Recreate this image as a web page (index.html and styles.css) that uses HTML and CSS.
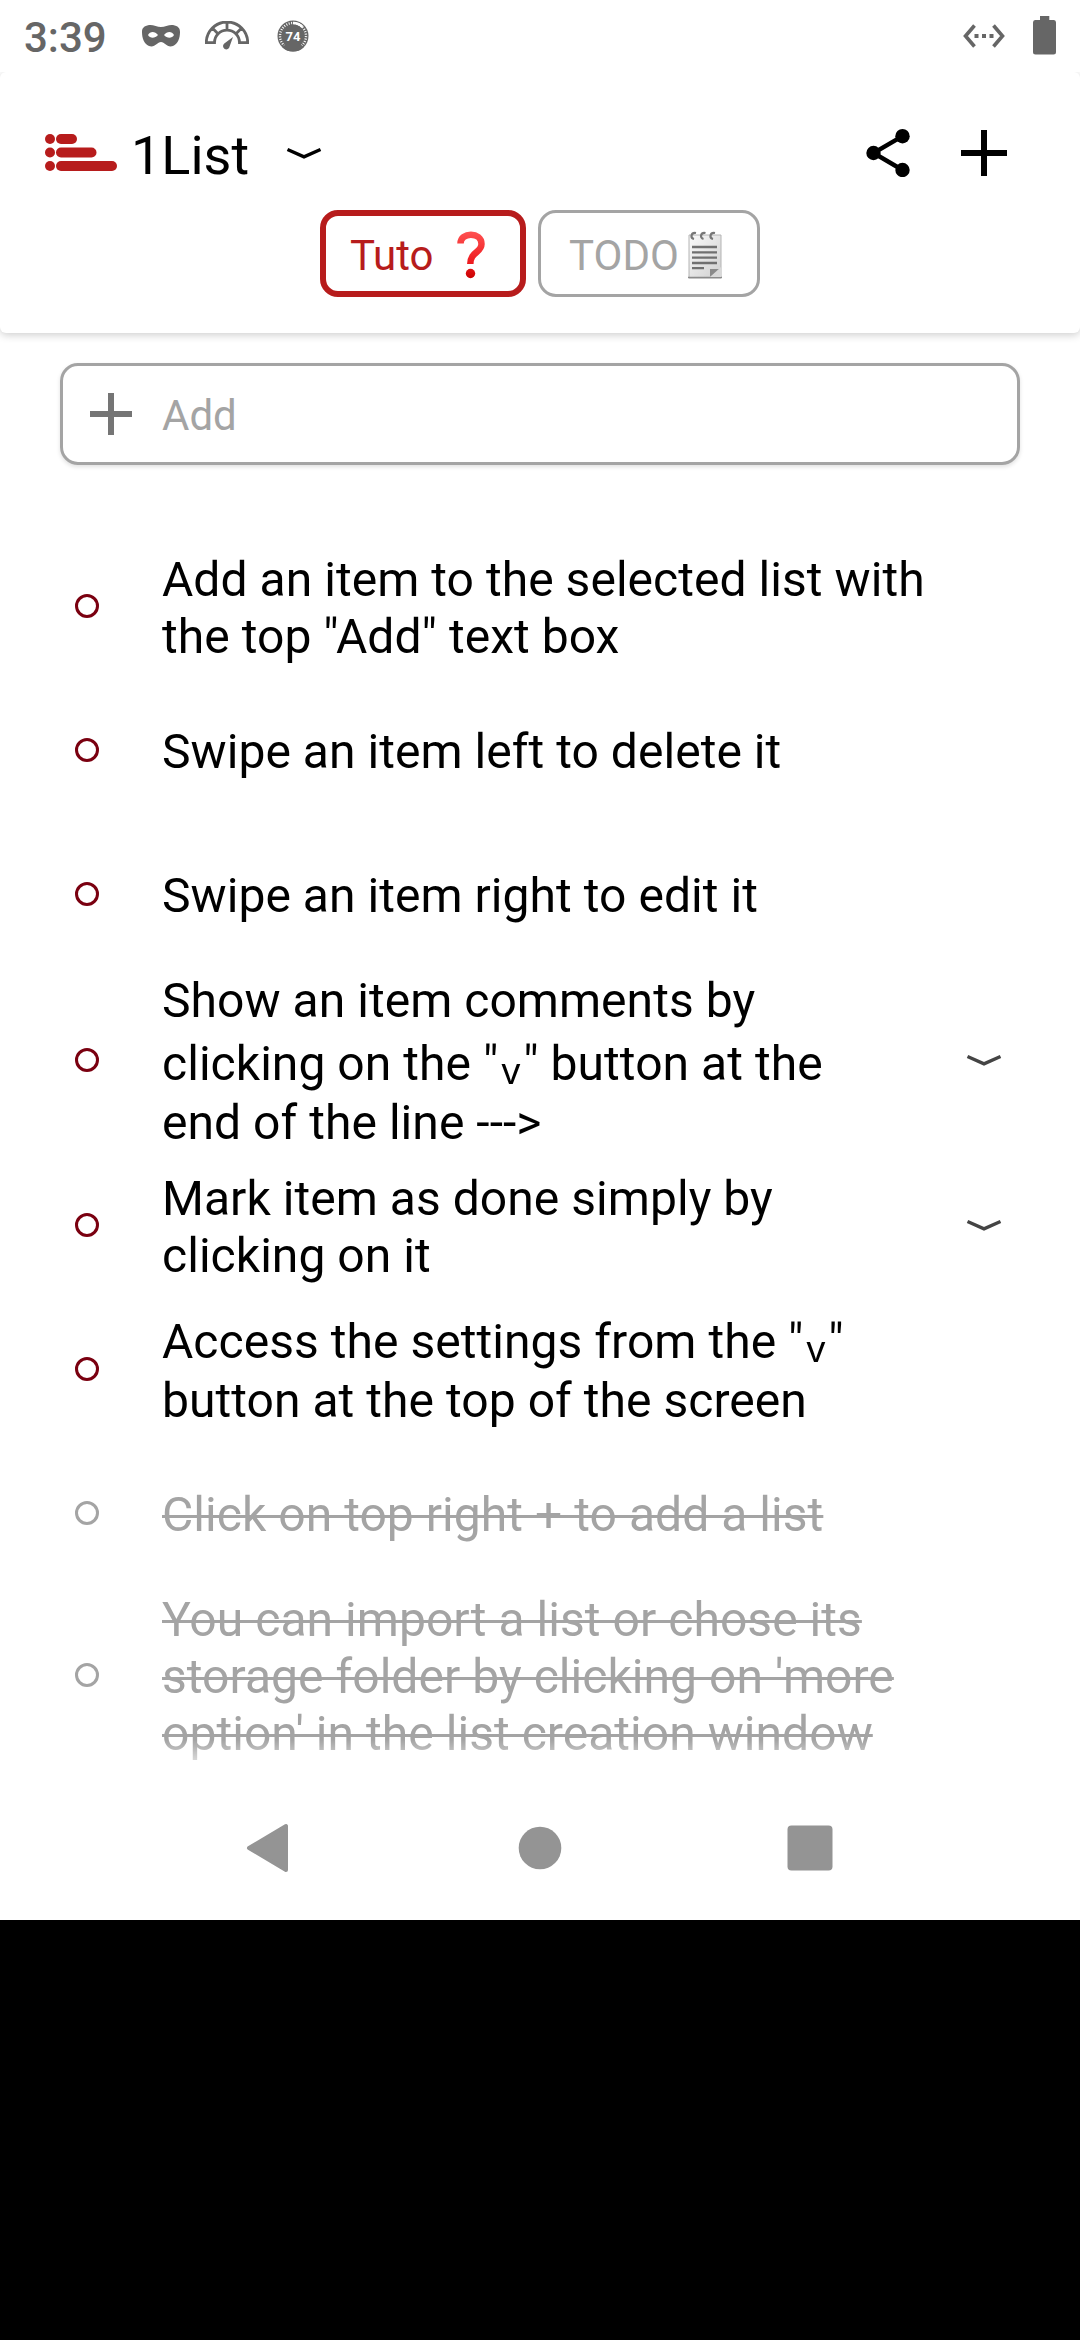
FILE: index.html
```html
<!DOCTYPE html>
<html lang="en">
<head>
<meta charset="utf-8">
<title>1List</title>
<link rel="stylesheet" href="styles.css">
</head>
<body>
<div class="screen">
  <div class="status">
    <span class="clock">3:39</span>
    <svg class="mask" width="40" height="24" viewBox="0 0 40 24"><path fill-rule="evenodd" d="M8 1C12 .4 16 3 20 3S28 .4 32 1C37 2 39 4 39 8C39 14 37 20 32 22C26 24 24 18 20 18S14 24 8 22C3 20 1 14 1 8C1 4 3 2 8 1ZM7 11C9 14.500 14 14.500 17 11C14 7 9 7 7 11ZM23 11C26 14.500 31 14.500 33 11C31 7 26 7 23 11Z"/></svg>
    <svg class="gauge" width="44" height="30" viewBox="0 0 44 30"><path d="M1.300 21.700A20.700 20.700 0 0 1 42.700 21.700H34.500A12.500 12.500 0 0 0 9.500 21.700ZM22 1V9M7.400 7.100L13.200 12.900M36.600 7.100L30.800 12.900" fill="none" stroke="#666" stroke-width="2.800"/><path d="M28 16L24.600 25.500A3.300 3.300 0 1 1 19.300 22.500Z"/></svg>
    <svg class="badge" width="32" height="32" viewBox="0 0 32 32"><circle cx="16" cy="16" r="15.500"/><circle cx="16" cy="16" r="13" fill="none" stroke="#fff" stroke-width="2.400" stroke-dasharray="1 1.500" pathLength="82" transform="rotate(130 16 16)"/><path d="M16 3A13 13 0 0 1 25.500 7" fill="none" stroke="#fff" stroke-width="2.600"/><path d="M5 27L16 19L27 27A15.500 15.500 0 0 1 5 27Z"/><text x="16" y="20.500" text-anchor="middle">74</text></svg>
    <span class="grow"></span>
    <svg class="ethernet" width="42" height="24" viewBox="0 0 42 24"><path d="M11.500 1.500L2.500 12L11.500 22.500M30.500 1.500L39.500 12L30.500 22.500" fill="none" stroke="#666" stroke-width="3.600"/><path d="M11.500 10h4v4h-4zM19 10h4v4h-4zM26.500 10h4v4h-4z"/></svg>
    <svg class="battery" width="23" height="39" viewBox="0 0 23 39"><path d="M7 0H16.300V4H21Q23 4 23 6.500V36Q23 38.500 20.500 38.500H2.500Q0 38.500 0 36V6.500Q0 4 2 4H7Z"/></svg>
  </div>

  <header class="header">
    <div class="bar">
      <svg class="logo" width="73" height="38" viewBox="0 0 73 38"><circle cx="5" cy="5" r="5"/><circle cx="5" cy="18.500" r="5"/><circle cx="5" cy="32" r="5"/><rect x="11" width="21" height="10" rx="5"/><rect x="11" y="13.500" width="40.500" height="10" rx="5"/><rect x="11" y="27" width="61" height="10" rx="5"/></svg>
      <h1 class="title">1List</h1>
      <svg class="chevron" width="36" height="14" viewBox="0 0 36 14"><path d="M1.500 2.500L18 9.800L34.500 2.500"/></svg>
      <span class="grow"></span>
      <svg class="share" width="44" height="48" viewBox="0 0 44 48"><path d="M36.500 7.200L7.500 24L36.500 41" fill="none" stroke="#000" stroke-width="4.400"/><circle cx="36.500" cy="7.200" r="7.200"/><circle cx="7.500" cy="24" r="7.200"/><circle cx="36.500" cy="41" r="7.200"/></svg>
      <svg width="46" height="46" viewBox="0 0 46 46"><path d="M20 0h6v20h20v6h-20v20h-6v-20h-20v-6h20z"/></svg>
    </div>
    <nav class="tabs">
      <div class="tab active"><span>Tuto</span>
        <svg class="question" width="28" height="48" viewBox="0 0 28 48"><defs><linearGradient id="red" x1="0" y1="0" x2="0" y2="48" gradientUnits="userSpaceOnUse"><stop offset="0" stop-color="#ff5252"/><stop offset=".65" stop-color="#ee1c20"/><stop offset="1" stop-color="#c80000"/></linearGradient></defs><path d="M3.500 12.500C3.500 .7 24.500 .7 24.500 13C24.500 22 13.300 20.500 13.300 33" fill="none" stroke="url(#red)" stroke-width="6.500"/><circle cx="13.500" cy="42.500" r="4.700" fill="url(#red)"/></svg>
      </div>
      <div class="tab"><span>TODO</span>
        <svg class="notepad" width="36" height="48" viewBox="0 0 36 48"><defs><linearGradient id="paper" x1="0" y1="0" x2="1" y2="1"><stop offset="0" stop-color="#fafafa"/><stop offset="1" stop-color="#cfcfcf"/></linearGradient></defs><path d="M2 4H34V47H2Z" fill="url(#paper)" stroke="#b4b4b4"/><path d="M1 46.500H35" stroke="#8b8b8b" stroke-width="1.500"/><path d="M7 8C3 7 4 1 9 2M16.500 8C12.500 7 13.500 1 18.500 2M26 8C22 7 23 1 28 2" fill="none" stroke="#777" stroke-width="2.200"/><path d="M5 16H30M5 21.300H30M5 26.600H30M5 32H30M5 37.200H17" stroke="#707070" stroke-width="2.300"/><path d="M23 46V38H34Z" fill="#8a8a8a"/><path d="M23 46L34 36V46Z" fill="#d8d8d8"/></svg>
      </div>
    </nav>
  </header>

  <main class="main">
    <div class="add">
      <svg width="42" height="42" viewBox="0 0 42 42"><path d="M18 0h6v18h18v6h-18v18h-6v-18h-18v-6h18z" fill="#757575"/></svg>
      <span>Add</span>
    </div>
    <ul class="list">
      <li class="item"><i class="dot"></i><p class="text">Add an item to the selected list with<br>the top "Add" text box</p></li>
      <li class="item"><i class="dot"></i><p class="text single">Swipe an item left to delete it</p></li>
      <li class="item"><i class="dot"></i><p class="text single">Swipe an item right to edit it</p></li>
      <li class="item"><i class="dot"></i><p class="text">Show an item comments by<br>clicking on the "<span class="low"><span class="arrow">v</span></span>" button at the<br>end of the line ---&gt;</p><svg class="chevron small" width="36" height="14" viewBox="0 0 36 14"><path d="M1.500 2.500L18 9.800L34.500 2.500"/></svg></li>
      <li class="item"><i class="dot"></i><p class="text">Mark item as done simply by<br>clicking on it</p><svg class="chevron small" width="36" height="14" viewBox="0 0 36 14"><path d="M1.500 2.500L18 9.800L34.500 2.500"/></svg></li>
      <li class="item"><i class="dot"></i><p class="text tall-first">Access the settings from the "<span class="low"><span class="arrow">v</span></span>"<br>button at the top of the screen</p></li>
      <li class="item done"><i class="dot"></i><p class="text single">Click on top right + to add a list</p></li>
      <li class="item done"><i class="dot"></i><p class="text">You can import a list or chose its<br>storage folder by clicking on 'more<br>option' in the list creation window</p></li>
    </ul>
  </main>

  <footer class="nav">
    <svg width="48" height="50" viewBox="0 0 48 50"><path d="M3 25L40 3V47Z" stroke="#949494" stroke-width="4" stroke-linejoin="round"/></svg>
    <svg width="48" height="50" viewBox="0 0 48 50"><circle cx="24" cy="25" r="21.300"/></svg>
    <svg width="48" height="50" viewBox="0 0 48 50"><rect x="1.500" y="2.500" width="45" height="45" rx="4"/></svg>
  </footer>
</div>
</body>
</html>
```

FILE: styles.css
```css
* { box-sizing: border-box; margin: 0; padding: 0; }
body { width: 1080px; height: 2340px; background: #000; font-family: Roboto, "Noto Sans", sans-serif; color: #000; overflow: hidden; }
svg { display: block; flex: none; }
.grow { flex: 1; }
.screen { display: flex; flex-direction: column; height: 1920px; background: #fff; }

.status { display: flex; align-items: center; height: 72px; padding: 0 24px; color: #666; fill: #666; }
.clock { width: 117px; padding-top: 3px; font-size: 42px; font-weight: 500; line-height: 50px; white-space: nowrap; }
.gauge { margin-left: 24px; }
.badge { margin-left: 28px; }
.badge text { font-size: 13px; font-weight: 700; fill: #fff; }
.battery { margin-left: 28px; margin-bottom: 1px; }

.header { height: 261px; border-radius: 6px; background: #fff; box-shadow: 0 2px 9px rgba(0, 0, 0, .2); clip-path: inset(0 0 -20px 0); }
.bar { display: flex; align-items: center; height: 138px; padding: 24px 73px 0 45px; }
.logo { fill: #b71c1c; }
.title { width: 155px; margin-left: 13px; padding-top: 5px; font-size: 54px; font-weight: 400; line-height: 64px; white-space: nowrap; }
.chevron path { fill: none; stroke: #000; stroke-width: 3.4; }
.bar .chevron { margin-top: 1px; }
.chevron.small { margin-top: 2px; }
.chevron.small path { stroke: #444; }
.share { margin-right: 51px; }
.tabs { display: flex; justify-content: center; gap: 12px; }
.tab { display: flex; align-items: center; height: 87px; padding: 0 35px; border: 3px solid #a4a4a4; border-radius: 18px; color: #a4a4a4; font-size: 42px; white-space: nowrap; }
.tab:not(.active) { width: 222px; padding: 0 28px; }
.tab.active { width: 206px; padding: 0 24px; border: 6px solid #b71c1c; color: #b71c1c; }
.tab span { padding-top: 3px; }
.tab svg { margin-top: 3px; }
.question { margin-left: 23px; }
.notepad { margin-left: 8px; }

.main { padding: 30px 60px 0; height: 1443px; }
.add { display: flex; align-items: center; gap: 30px; height: 102px; padding-left: 27px; border: 3px solid #a4a4a4; border-radius: 18px; box-shadow: 0 2px 4px rgba(0, 0, 0, .12); color: #a4a4a4; font-size: 42px; }
.add span { padding-top: 2px; }
.list { height: 1242px; margin: 69px -60px 0; padding: 0 78px 0 75px; list-style: none; overflow: hidden; -webkit-mask-image: linear-gradient(to top, transparent, #000 36px); mask-image: linear-gradient(to top, transparent, #000 36px); }
.item { display: flex; align-items: center; min-height: 144px; }
.dot { flex: none; width: 24px; height: 24px; margin-right: 63px; border: 3px solid #7a0010; border-radius: 50%; }
.text { flex: 1; padding: 6px 0 2px; font-size: 48px; line-height: normal; letter-spacing: .045px; white-space: nowrap; }
.text.single { padding: 5px 0 3px; }
.text.tall-first { padding: 0 0 2px; }
.low { font-family: "Noto Sans"; }
.arrow { position: relative; top: 4px; padding: 0 3px; font-size: 37px; }
.done .dot { border-color: #a4a4a4; }
.done .text { color: #a4a4a4; text-decoration: line-through; text-decoration-thickness: 3px; }

.nav { display: flex; align-items: center; justify-content: center; gap: 222px; height: 144px; fill: #949494; }
```
